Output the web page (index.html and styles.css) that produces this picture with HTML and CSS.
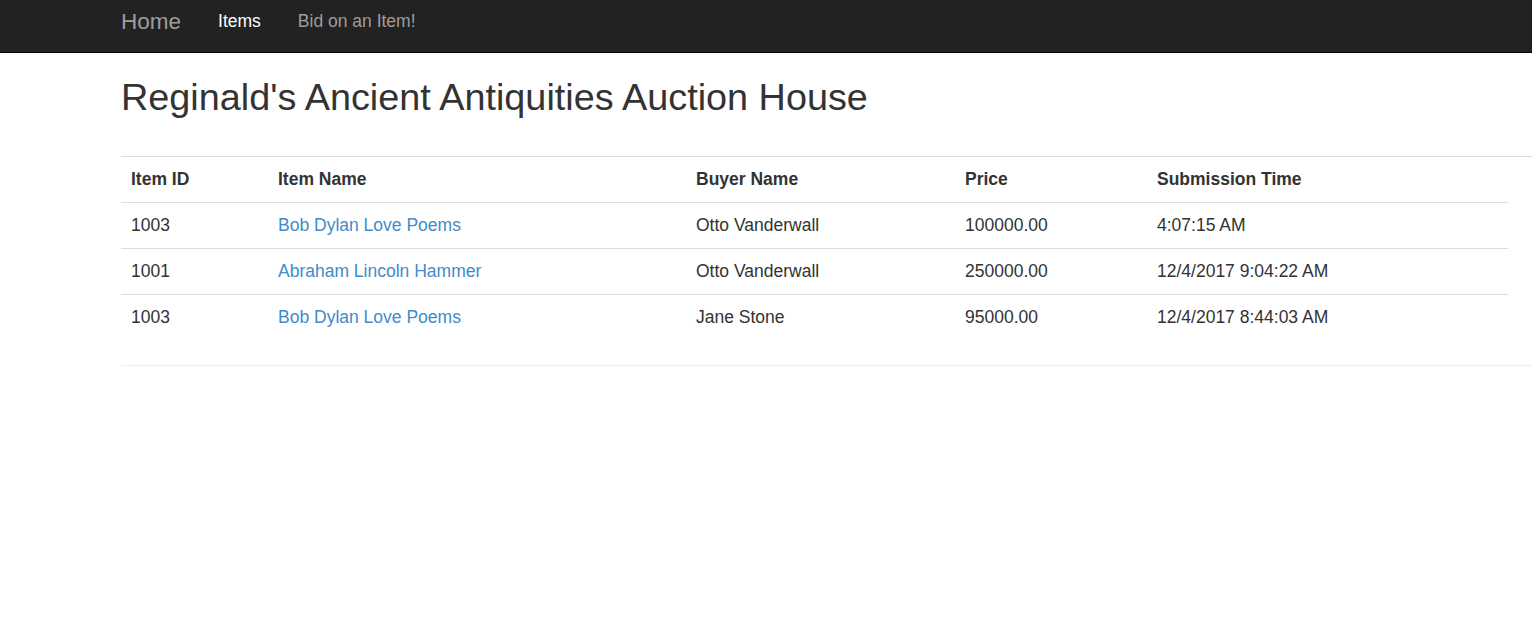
FILE: index.html
```html
<!DOCTYPE html>
<html>
<head>
<meta charset="utf-8">
<title>Reginald's Ancient Antiquities Auction House</title>
<link rel="stylesheet" href="styles.css">
</head>
<body>
<nav class="navbar">
  <a class="brand" href="#">Home</a>
  <a class="nav-link active" href="#">Items</a>
  <a class="nav-link" href="#">Bid on an Item!</a>
</nav>
<main class="content">
  <h1 class="title">Reginald's Ancient Antiquities Auction House</h1>
  <hr class="rule">
  <table class="bids">
    <colgroup>
      <col class="c-id"><col class="c-name"><col class="c-buyer"><col class="c-price"><col class="c-time">
    </colgroup>
    <thead>
      <tr><th>Item ID</th><th>Item Name</th><th>Buyer Name</th><th>Price</th><th>Submission Time</th></tr>
    </thead>
    <tbody>
      <tr><td>1003</td><td><a href="#">Bob Dylan Love Poems</a></td><td>Otto Vanderwall</td><td>100000.00</td><td>4:07:15 AM</td></tr>
      <tr><td>1001</td><td><a href="#">Abraham Lincoln Hammer</a></td><td>Otto Vanderwall</td><td>250000.00</td><td>12/4/2017 9:04:22 AM</td></tr>
      <tr><td>1003</td><td><a href="#">Bob Dylan Love Poems</a></td><td>Jane Stone</td><td>95000.00</td><td>12/4/2017 8:44:03 AM</td></tr>
    </tbody>
  </table>
  <hr class="rule rule-light">
</main>
</body>
</html>
```
FILE: styles.css
```css
* { box-sizing: border-box; }
html, body { margin: 0; padding: 0; }
body {
  font-family: "Liberation Sans", Arial, Helvetica, sans-serif;
  font-size: 17.5px;
  line-height: 25px;
  color: #333;
  background: #fff;
}
a { text-decoration: none; }

.navbar {
  height: 53px;
  background: #222;
  border-bottom: 1px solid #080808;
  display: flex;
  align-items: flex-start;
  gap: 37px;
  padding: 9px 0 0 121px;
}
.brand {
  font-size: 22.5px;
  line-height: 25px;
  color: #9d9d9d;
}
.nav-link {
  font-size: 17.5px;
  line-height: 25px;
  color: #9d9d9d;
}
.nav-link.active { color: #fff; }

.content {
  padding-left: 121px;
}
.title {
  margin: 24px 0 0;
  font-size: 37.8px;
  line-height: 41px;
  font-weight: 500;
  color: #333;
}
.rule {
  margin: 38px 0 0;
  border: 0;
  border-top: 1px solid #ddd;
  height: 0;
}
.rule-light {
  margin-top: 25px;
  border-top-color: #eee;
}

.bids {
  width: 1387px;
  border-collapse: collapse;
  table-layout: fixed;
}
.c-id { width: 147px; }
.c-name { width: 418px; }
.c-buyer { width: 269px; }
.c-price { width: 192px; }
.c-time { width: 361px; }
.bids th, .bids td {
  text-align: left;
  padding: 10px 10px;
  line-height: 25px;
  vertical-align: top;
}
.bids th { font-weight: bold; }
.bids tbody td { border-top: 1px solid #ddd; }
.bids a { color: #428bca; }
```
